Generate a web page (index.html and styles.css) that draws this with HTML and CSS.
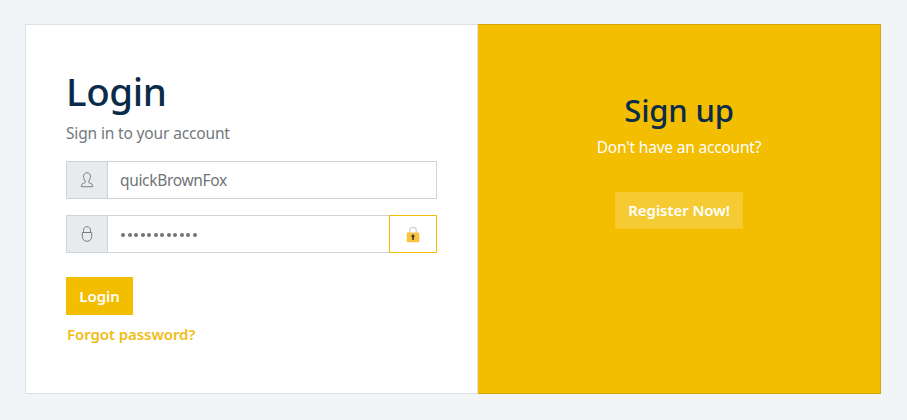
FILE: index.html
```html
<!DOCTYPE html>
<html lang="en">
<head>
<meta charset="utf-8">
<title>Login</title>
<link rel="stylesheet" href="styles.css">
</head>
<body>
<main class="card-group">
  <section class="card login">
    <h1>Login</h1>
    <p class="muted">Sign in to your account</p>
    <div class="input-group">
      <span class="addon"><svg width="16" height="16" viewBox="0 0 16 16" fill="none" stroke="#7d7f82"><path d="M6.4 9.2C5.2 8 4.5 6 4.6 4.1C4.7 2 6 .8 8 .8s3.300 1.200 3.400 3.300C11.500 6 10.800 8 9.600 9.200v1.100L13 12.200c.6.5.7 1.200.7 2.500H2.300c0-1.300.1-2 .7-2.500l3.400-1.900z"/></svg></span>
      <div class="field user">quickBrownFox</div>
    </div>
    <div class="input-group">
      <span class="addon"><svg width="16" height="16" viewBox="0 0 16 16" fill="none" stroke="#7d7f82"><path d="M3.300 6.500h9.400v4c0 2.800-1.900 4.800-4.700 4.800s-4.700-2-4.700-4.800zM4.500 6.500V4.200C4.500 2 5.900.7 8 .7s3.500 1.300 3.500 3.500v2.300"/></svg></span>
      <div class="field password"><i></i><i></i><i></i><i></i><i></i><i></i><i></i><i></i><i></i><i></i><i></i><i></i></div>
      <button class="reveal" aria-label="Show password"><svg width="14" height="17" viewBox="0 0 14 17"><path d="M3.700 8V4.500C3.700 2.400 5 1.300 7 1.300s3.300 1.100 3.300 3.200V8" fill="none" stroke="#ccd2d8" stroke-width="1.300"/><rect x=".7" y="6.500" width="12.600" height="9.800" rx="1.200" fill="#fbc23c"/><path d="M7 8.600a1.500 1.500 0 0 1 .8 2.800V14H6.200v-2.600A1.500 1.500 0 0 1 7 8.600z" fill="#483c3b"/></svg></button>
    </div>
    <button class="btn primary">Login</button>
    <a class="forgot">Forgot password?</a>
  </section>
  <section class="card signup">
    <h2>Sign up</h2>
    <p>Don't have an account?</p>
    <button class="btn register">Register Now!</button>
  </section>
</main>
</body>
</html>
```
FILE: styles.css
```css
* { box-sizing: border-box; }
body {
  margin: 0;
  padding: 24px 26px 26px 25px;
  height: 420px;
  overflow: hidden;
  background: #f1f5f8;
  font: 15.5px/24px "Noto Sans", "Open Sans", sans-serif;
}
h1, h2, p { margin: 0; }
h1, h2 { color: #0b2b4a; font-weight: 550; }
.card-group { display: flex; height: 370px; }
.card { display: flex; flex-direction: column; }
.login {
  width: 453px;
  padding: 41px 40px 0;
  align-items: flex-start;
  background: #fff;
  border: 1px solid #dedfe0;
}
.login h1 { font-size: 38.5px; line-height: 50px; margin-bottom: 5px; letter-spacing: -.4px; }
.muted { color: #73787d; margin-bottom: 16px; letter-spacing: -.15px; }
.input-group { display: flex; width: 371px; height: 38px; margin-bottom: 16px; }
.addon {
  display: flex;
  width: 42px;
  align-items: center;
  justify-content: center;
  background: #e8ebee;
  border: 1px solid #ced2da;
}
.field {
  display: flex;
  flex: 1;
  align-items: center;
  padding-left: 12px;
  border: 1px solid #ced2da;
  border-left: 0;
  color: #707478;
}
.user { letter-spacing: -.33px; }
.password { gap: 2.5px; padding-left: 13px; border-right: 0; }
.password i { width: 4px; height: 4px; margin-top: 1px; border-radius: 50%; background: #707478; }
.reveal {
  display: flex;
  width: 48px;
  padding: 0;
  align-items: center;
  justify-content: center;
  background: #fff;
  border: 1px solid #f3bd00;
}
.reveal svg { margin-right: 1px; }
.btn {
  height: 38px;
  padding: 0;
  border: 0;
  color: #fff;
  font: 600 15px/24px "Noto Sans", "Open Sans", sans-serif;
  letter-spacing: -.05px;
}
.primary { width: 67px; margin-top: 8px; background: #f3bd00; }
.forgot { margin: 7px 0 0 1px; color: #efbd19; font-size: 15px; font-weight: 600; letter-spacing: -.08px; }
.signup {
  width: 403px;
  padding-top: 66px;
  align-items: center;
  background: #f3bd00;
  border: 1px solid #d3a70b;
  border-left: 0;
  color: #fff;
}
.signup h2 { font-size: 31px; line-height: 38px; margin-bottom: 6px; letter-spacing: -.2px; }
.signup p { letter-spacing: -.2px; }
.register { width: 128px; height: 37px; padding-bottom: 1px; margin-top: 33px; background: #f6ca33; border: 1px solid #f5c727; }
```
